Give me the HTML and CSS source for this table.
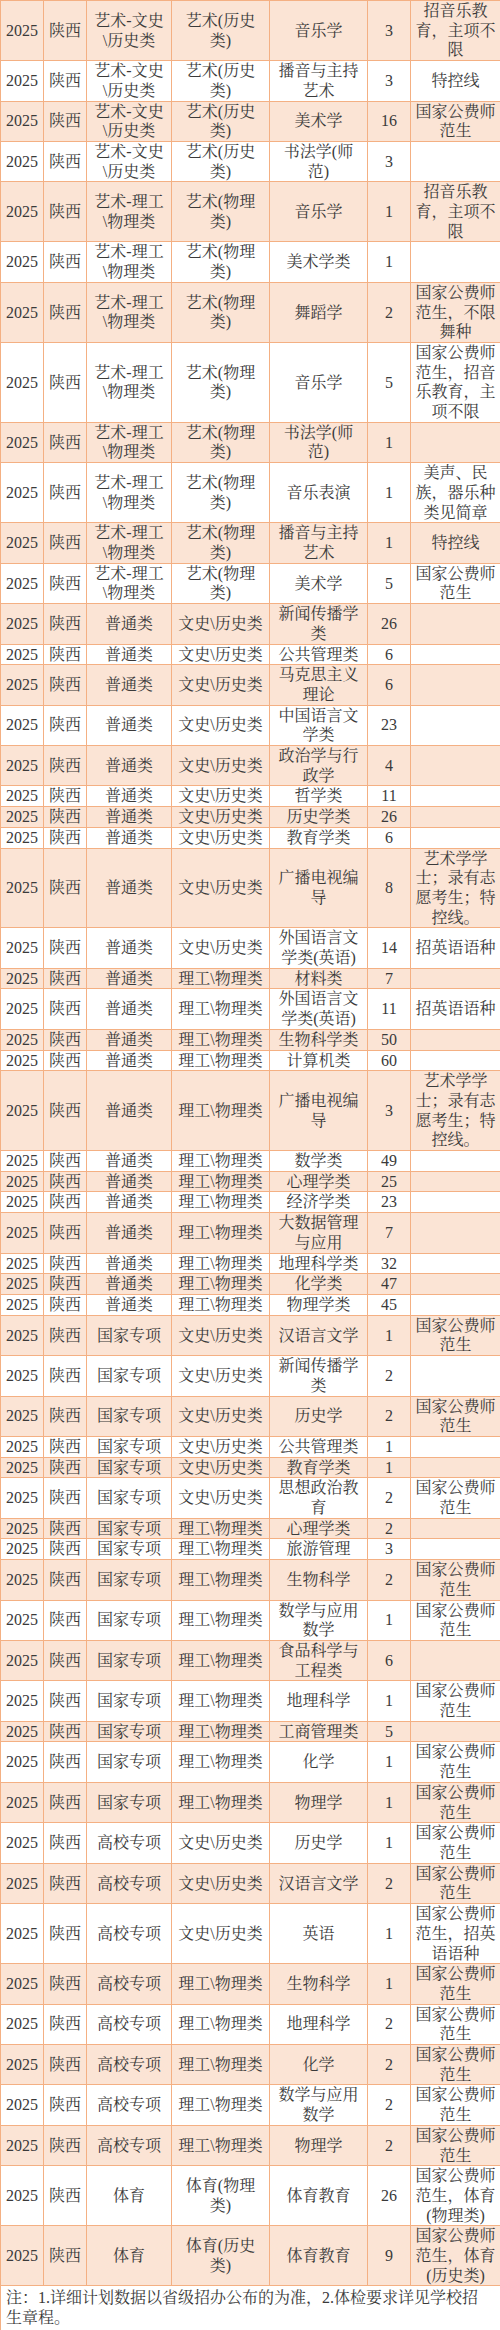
FILE: index.html
```html
<!DOCTYPE html>
<html lang="zh-CN">
<head>
<meta charset="utf-8">
<title>2025 陕西 招生计划</title>
<link rel="stylesheet" href="styles.css">
</head>
<body>
<table class="plan">
<colgroup>
<col class="c-year"><col class="c-prov"><col class="c-type"><col class="c-subj"><col class="c-major"><col class="c-num"><col class="c-note">
</colgroup>
<tbody>
<tr><td>2025</td><td>陕西</td><td>艺术-文史\历史类</td><td>艺术(历史类)</td><td>音乐学</td><td>3</td><td>招音乐教育，主项不限</td></tr>
<tr><td>2025</td><td>陕西</td><td>艺术-文史\历史类</td><td>艺术(历史类)</td><td>播音与主持艺术</td><td>3</td><td>特控线</td></tr>
<tr><td>2025</td><td>陕西</td><td>艺术-文史\历史类</td><td>艺术(历史类)</td><td>美术学</td><td>16</td><td>国家公费师范生</td></tr>
<tr><td>2025</td><td>陕西</td><td>艺术-文史\历史类</td><td>艺术(历史类)</td><td>书法学(师范)</td><td>3</td><td></td></tr>
<tr><td>2025</td><td>陕西</td><td>艺术-理工\物理类</td><td>艺术(物理类)</td><td>音乐学</td><td>1</td><td>招音乐教育，主项不限</td></tr>
<tr><td>2025</td><td>陕西</td><td>艺术-理工\物理类</td><td>艺术(物理类)</td><td>美术学类</td><td>1</td><td></td></tr>
<tr><td>2025</td><td>陕西</td><td>艺术-理工\物理类</td><td>艺术(物理类)</td><td>舞蹈学</td><td>2</td><td>国家公费师范生，不限舞种</td></tr>
<tr><td>2025</td><td>陕西</td><td>艺术-理工\物理类</td><td>艺术(物理类)</td><td>音乐学</td><td>5</td><td>国家公费师范生，招音乐教育，主项不限</td></tr>
<tr><td>2025</td><td>陕西</td><td>艺术-理工\物理类</td><td>艺术(物理类)</td><td>书法学(师范)</td><td>1</td><td></td></tr>
<tr><td>2025</td><td>陕西</td><td>艺术-理工\物理类</td><td>艺术(物理类)</td><td>音乐表演</td><td>1</td><td>美声、民族，器乐种类见简章</td></tr>
<tr><td>2025</td><td>陕西</td><td>艺术-理工\物理类</td><td>艺术(物理类)</td><td>播音与主持艺术</td><td>1</td><td>特控线</td></tr>
<tr><td>2025</td><td>陕西</td><td>艺术-理工\物理类</td><td>艺术(物理类)</td><td>美术学</td><td>5</td><td>国家公费师范生</td></tr>
<tr><td>2025</td><td>陕西</td><td>普通类</td><td>文史\历史类</td><td>新闻传播学类</td><td>26</td><td></td></tr>
<tr><td>2025</td><td>陕西</td><td>普通类</td><td>文史\历史类</td><td>公共管理类</td><td>6</td><td></td></tr>
<tr><td>2025</td><td>陕西</td><td>普通类</td><td>文史\历史类</td><td>马克思主义理论</td><td>6</td><td></td></tr>
<tr><td>2025</td><td>陕西</td><td>普通类</td><td>文史\历史类</td><td>中国语言文学类</td><td>23</td><td></td></tr>
<tr><td>2025</td><td>陕西</td><td>普通类</td><td>文史\历史类</td><td>政治学与行政学</td><td>4</td><td></td></tr>
<tr><td>2025</td><td>陕西</td><td>普通类</td><td>文史\历史类</td><td>哲学类</td><td>11</td><td></td></tr>
<tr><td>2025</td><td>陕西</td><td>普通类</td><td>文史\历史类</td><td>历史学类</td><td>26</td><td></td></tr>
<tr><td>2025</td><td>陕西</td><td>普通类</td><td>文史\历史类</td><td>教育学类</td><td>6</td><td></td></tr>
<tr><td>2025</td><td>陕西</td><td>普通类</td><td>文史\历史类</td><td>广播电视编导</td><td>8</td><td>艺术学学士；录有志愿考生；特控线。</td></tr>
<tr><td>2025</td><td>陕西</td><td>普通类</td><td>文史\历史类</td><td>外国语言文学类(英语)</td><td>14</td><td>招英语语种</td></tr>
<tr><td>2025</td><td>陕西</td><td>普通类</td><td>理工\物理类</td><td>材料类</td><td>7</td><td></td></tr>
<tr><td>2025</td><td>陕西</td><td>普通类</td><td>理工\物理类</td><td>外国语言文学类(英语)</td><td>11</td><td>招英语语种</td></tr>
<tr><td>2025</td><td>陕西</td><td>普通类</td><td>理工\物理类</td><td>生物科学类</td><td>50</td><td></td></tr>
<tr><td>2025</td><td>陕西</td><td>普通类</td><td>理工\物理类</td><td>计算机类</td><td>60</td><td></td></tr>
<tr><td>2025</td><td>陕西</td><td>普通类</td><td>理工\物理类</td><td>广播电视编导</td><td>3</td><td>艺术学学士；录有志愿考生；特控线。</td></tr>
<tr><td>2025</td><td>陕西</td><td>普通类</td><td>理工\物理类</td><td>数学类</td><td>49</td><td></td></tr>
<tr><td>2025</td><td>陕西</td><td>普通类</td><td>理工\物理类</td><td>心理学类</td><td>25</td><td></td></tr>
<tr><td>2025</td><td>陕西</td><td>普通类</td><td>理工\物理类</td><td>经济学类</td><td>23</td><td></td></tr>
<tr><td>2025</td><td>陕西</td><td>普通类</td><td>理工\物理类</td><td>大数据管理与应用</td><td>7</td><td></td></tr>
<tr><td>2025</td><td>陕西</td><td>普通类</td><td>理工\物理类</td><td>地理科学类</td><td>32</td><td></td></tr>
<tr><td>2025</td><td>陕西</td><td>普通类</td><td>理工\物理类</td><td>化学类</td><td>47</td><td></td></tr>
<tr><td>2025</td><td>陕西</td><td>普通类</td><td>理工\物理类</td><td>物理学类</td><td>45</td><td></td></tr>
<tr><td>2025</td><td>陕西</td><td>国家专项</td><td>文史\历史类</td><td>汉语言文学</td><td>1</td><td>国家公费师范生</td></tr>
<tr><td>2025</td><td>陕西</td><td>国家专项</td><td>文史\历史类</td><td>新闻传播学类</td><td>2</td><td></td></tr>
<tr><td>2025</td><td>陕西</td><td>国家专项</td><td>文史\历史类</td><td>历史学</td><td>2</td><td>国家公费师范生</td></tr>
<tr><td>2025</td><td>陕西</td><td>国家专项</td><td>文史\历史类</td><td>公共管理类</td><td>1</td><td></td></tr>
<tr><td>2025</td><td>陕西</td><td>国家专项</td><td>文史\历史类</td><td>教育学类</td><td>1</td><td></td></tr>
<tr><td>2025</td><td>陕西</td><td>国家专项</td><td>文史\历史类</td><td>思想政治教育</td><td>2</td><td>国家公费师范生</td></tr>
<tr><td>2025</td><td>陕西</td><td>国家专项</td><td>理工\物理类</td><td>心理学类</td><td>2</td><td></td></tr>
<tr><td>2025</td><td>陕西</td><td>国家专项</td><td>理工\物理类</td><td>旅游管理</td><td>3</td><td></td></tr>
<tr><td>2025</td><td>陕西</td><td>国家专项</td><td>理工\物理类</td><td>生物科学</td><td>2</td><td>国家公费师范生</td></tr>
<tr><td>2025</td><td>陕西</td><td>国家专项</td><td>理工\物理类</td><td>数学与应用数学</td><td>1</td><td>国家公费师范生</td></tr>
<tr><td>2025</td><td>陕西</td><td>国家专项</td><td>理工\物理类</td><td>食品科学与工程类</td><td>6</td><td></td></tr>
<tr><td>2025</td><td>陕西</td><td>国家专项</td><td>理工\物理类</td><td>地理科学</td><td>1</td><td>国家公费师范生</td></tr>
<tr><td>2025</td><td>陕西</td><td>国家专项</td><td>理工\物理类</td><td>工商管理类</td><td>5</td><td></td></tr>
<tr><td>2025</td><td>陕西</td><td>国家专项</td><td>理工\物理类</td><td>化学</td><td>1</td><td>国家公费师范生</td></tr>
<tr><td>2025</td><td>陕西</td><td>国家专项</td><td>理工\物理类</td><td>物理学</td><td>1</td><td>国家公费师范生</td></tr>
<tr><td>2025</td><td>陕西</td><td>高校专项</td><td>文史\历史类</td><td>历史学</td><td>1</td><td>国家公费师范生</td></tr>
<tr><td>2025</td><td>陕西</td><td>高校专项</td><td>文史\历史类</td><td>汉语言文学</td><td>2</td><td>国家公费师范生</td></tr>
<tr><td>2025</td><td>陕西</td><td>高校专项</td><td>文史\历史类</td><td>英语</td><td>1</td><td>国家公费师范生，招英语语种</td></tr>
<tr><td>2025</td><td>陕西</td><td>高校专项</td><td>理工\物理类</td><td>生物科学</td><td>1</td><td>国家公费师范生</td></tr>
<tr><td>2025</td><td>陕西</td><td>高校专项</td><td>理工\物理类</td><td>地理科学</td><td>2</td><td>国家公费师范生</td></tr>
<tr><td>2025</td><td>陕西</td><td>高校专项</td><td>理工\物理类</td><td>化学</td><td>2</td><td>国家公费师范生</td></tr>
<tr><td>2025</td><td>陕西</td><td>高校专项</td><td>理工\物理类</td><td>数学与应用数学</td><td>2</td><td>国家公费师范生</td></tr>
<tr><td>2025</td><td>陕西</td><td>高校专项</td><td>理工\物理类</td><td>物理学</td><td>2</td><td>国家公费师范生</td></tr>
<tr><td>2025</td><td>陕西</td><td>体育</td><td>体育(物理类)</td><td>体育教育</td><td>26</td><td>国家公费师范生，体育(物理类)</td></tr>
<tr><td>2025</td><td>陕西</td><td>体育</td><td>体育(历史类)</td><td>体育教育</td><td>9</td><td>国家公费师范生，体育(历史类)</td></tr>
</tbody>
<tfoot>
<tr><td class="note" colspan="7">注：1.详细计划数据以省级招办公布的为准，2.体检要求详见学校招生章程。</td></tr>
</tfoot>
</table>
</body>
</html>
```

FILE: styles.css
```css
html, body {
  margin: 0;
  padding: 0;
  background: #ffffff;
}

.plan {
  width: 500px;
  table-layout: fixed;
  border-collapse: collapse;
  font-family: "Liberation Serif", "Noto Serif CJK SC", "Noto Sans CJK SC", serif;
  font-size: 16px;
  line-height: 19.7px;
  color: #3a3a3a;
}

.c-year { width: 43px; }
.c-prov { width: 43px; }
.c-type { width: 85px; }
.c-subj { width: 98px; }
.c-major { width: 98px; }
.c-num { width: 43px; }
.c-note { width: 90px; }

.plan td {
  border: 1px solid #f4b083;
  padding: 0 4px;
  text-align: center;
  vertical-align: middle;
  white-space: normal;
}

.plan tbody tr:nth-child(odd) td {
  background: #fbe4d5;
}

.plan td.note {
  text-align: left;
  padding: 2px 12px 2px 5px;
  background: #ffffff;
}
```
